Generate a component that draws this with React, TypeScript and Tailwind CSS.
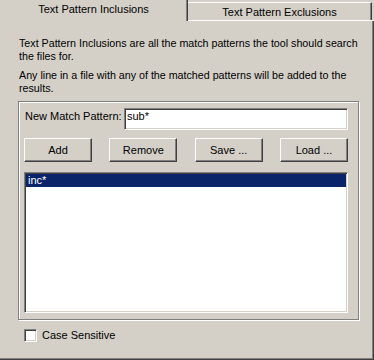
export default function App() {
  const sunken =
    "border-t border-l border-t-[#808080] border-l-[#808080] border-b border-r border-b-white border-r-white shadow-[inset_1px_1px_0_#404040,inset_-1px_-1px_0_#d4d0c8] bg-white";
  const button =
    "w-[68px] h-[24px] flex items-center justify-center border-t border-l border-t-white border-l-white border-b border-r border-b-[#404040] border-r-[#404040] shadow-[inset_-1px_-1px_0_#808080]";
  return (
    <div className="w-[374px] h-[360px] bg-[#d4d0c8] flex flex-col text-[11px] leading-[13px] text-black font-['Liberation_Sans',Arial,sans-serif]">
      <div className="flex h-[21px] shrink-0">
        <div className="w-[188px] h-full flex justify-center pt-[3px] border-r border-r-[#404040] shadow-[inset_-1px_0_0_#808080] whitespace-nowrap">
          Text Pattern Inclusions
        </div>
        <div className="flex-1 flex flex-col">
          <div className="h-[2px] shrink-0" />
          <div className="flex-1 flex">
            <div className="w-[184px] flex justify-center pt-[3px] border-t border-t-white border-r border-r-[#404040] shadow-[inset_-1px_0_0_#808080] whitespace-nowrap">
              Text Pattern Exclusions
            </div>
            <div className="flex-1" />
          </div>
          <div className="h-px bg-white shrink-0" />
        </div>
      </div>
      <div className="flex-1 flex flex-col pl-[18px] pt-[16px] border-r border-b border-r-[#404040] border-b-[#404040] shadow-[inset_-1px_-1px_0_#808080]">
        <div className="ml-[1px] whitespace-nowrap text-[10.7px]">
          <div>Text Pattern Inclusions are all the match patterns the tool should search</div>
          <div>the files for.</div>
        </div>
        <div className="ml-[1px] mt-[6px] whitespace-nowrap text-[10.7px]">
          <div>Any line in a file with any of the matched patterns will be added to the</div>
          <div>results.</div>
        </div>
        <div className="mt-[6px] w-[341px] h-[219px] shrink-0 border border-[#808080] shadow-[inset_1px_1px_0_#fff,1px_1px_0_#fff] pt-[6px] pl-[5px] flex flex-col">
          <div className="flex items-start h-[22px]">
            <div className="ml-[1px] w-[99px] mt-[2px] whitespace-nowrap">New Match Pattern:</div>
            <div className={`w-[224px] h-[22px] pl-[2px] pt-[1px] ${sunken}`}>sub*</div>
          </div>
          <div className="mt-[8px] w-[324px] flex justify-between">
            <div className={button}>Add</div>
            <div className={button}>Remove</div>
            <div className={button}>Save ...</div>
            <div className={button}>Load ...</div>
          </div>
          <div className={`mt-[10px] w-[324px] h-[141px] p-px ${sunken}`}>
            <div className="h-[13px] bg-[#0a246a] text-white pl-[2px] leading-[13px]">inc*</div>
          </div>
        </div>
        <div className="mt-[9px] ml-[6px] flex items-center">
          <div className={`w-[13px] h-[13px] ${sunken}`} />
          <div className="ml-[5px]">Case Sensitive</div>
        </div>
      </div>
    </div>
  );
}
